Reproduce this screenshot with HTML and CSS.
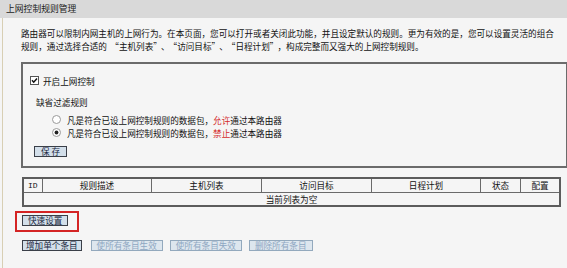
FILE: index.html
```html
<!DOCTYPE html>
<html lang="zh-CN">
<head>
    <meta charset="UTF-8">
    <title>上网控制规则管理</title>
    <link rel="stylesheet" href="styles.css">
</head>
<body>

    <div class="title">上网控制规则管理</div>

    <div class="main">
        <p class="intro">路由器可以限制内网主机的上网行为。在本页面，您可以打开或者关闭此功能，并且设定默认的规则。更为有效的是，您可以设置灵活的组合<br>规则，通过选择合适的<span class="quote">“主机列表”</span>、<span class="quote">“访问目标”</span>、<span class="quote">“日程计划”</span>，构成完整而又强大的上网控制规则。</p>

        <div class="panel">
            <label class="check-row">
                <svg class="cbox" width="9" height="9" viewBox="0 0 9 9">
                    <rect x="0.5" y="0.5" width="8" height="8" fill="#fff" stroke="#555"/>
                    <path d="M2 4.3 L3.7 6.2 L7 2.4" fill="none" stroke="#111" stroke-width="1.5"/>
                </svg>
                <span>开启上网控制</span>
            </label>

            <div class="rule-title">缺省过滤规则</div>

            <div class="radios">
                <label class="radio-row">
                    <svg class="rbox" width="9" height="9" viewBox="0 0 9 9">
                        <circle cx="4.5" cy="4.5" r="4" fill="#fff" stroke="#9a9a9a"/>
                    </svg>
                    <span>凡是符合已设上网控制规则的数据包，<span class="red">允许</span>通过本路由器</span>
                </label>
                <label class="radio-row">
                    <svg class="rbox" width="9" height="9" viewBox="0 0 9 9">
                        <circle cx="4.5" cy="4.5" r="4" fill="#fff" stroke="#9a9a9a"/>
                        <circle cx="4.5" cy="4.5" r="1.9" fill="#222"/>
                    </svg>
                    <span>凡是符合已设上网控制规则的数据包，<span class="red">禁止</span>通过本路由器</span>
                </label>
            </div>

            <button class="btn save-btn">保 存</button>
        </div>

        <table class="rules">
            <colgroup>
                <col style="width:19px">
                <col style="width:109px">
                <col style="width:110px">
                <col style="width:110px">
                <col style="width:109px">
                <col style="width:40px">
                <col style="width:38px">
            </colgroup>
            <thead>
                <tr>
                    <th class="id-col">ID</th>
                    <th>规则描述</th>
                    <th>主机列表</th>
                    <th>访问目标</th>
                    <th>日程计划</th>
                    <th>状态</th>
                    <th>配置</th>
                </tr>
            </thead>
            <tbody>
                <tr>
                    <td colspan="7">当前列表为空</td>
                </tr>
            </tbody>
        </table>

        <div class="quick">
            <button class="btn">快速设置</button>
        </div>

        <div class="actions">
            <button class="btn add-btn">增加单个条目</button>
            <button class="btn off-btn">使所有条目生效</button>
            <button class="btn off-btn">使所有条目失效</button>
            <button class="btn off-btn">删除所有条目</button>
        </div>
    </div>

</body>
</html>
```

FILE: styles.css
```css
body {
    margin: 0;
    padding: 0;
    width: 567px;
    height: 268px;
    overflow: hidden;
    background: #f5f5f5;
    font-family: "Noto Sans CJK SC", sans-serif;
    font-size: 8.6px;
    color: #111;
}
.title {
    height: 18px;
    line-height: 18px;
    padding-left: 6px;
    background: #d9d9d9;
    font-size: 8.8px;
    color: #222;
}
.main {
    margin-left: 2px;
    border-left: 1px solid #d8cfb4;
    height: 250px;
}
.intro {
    margin: 0;
    padding: 9px 0 0 18px;
    width: 540px;
    line-height: 13px;
}
/* quote marks drawn full width, as in the old router font */
.quote {
    margin: 0 0.39em;
}
/* settings box */
.panel {
    margin: 9px 0 0 18px;
    width: 536px;
    border: 2px solid #6b6b6b;
    padding: 10px 0 9px 7px;
    box-sizing: content-box;
}
.check-row {
    display: flex;
    align-items: center;
    gap: 4px;
    height: 13px;
}
.rule-title {
    margin: 9px 0 0 6px;
    line-height: 13px;
}
.radios {
    margin: 4px 0 0 22px;
}
.radio-row {
    display: flex;
    align-items: center;
    gap: 6px;
    height: 13px;
    white-space: nowrap;
}
.red {
    color: #d42a2a;
}
.btn {
    display: block;
    height: 11px;
    padding: 0 5px;
    margin: 0;
    border: 1px solid #3a3f48;
    background: #d3dfea;
    color: #1a2840;
    font-family: "Noto Sans CJK SC", sans-serif;
    font-size: 8.6px;
    line-height: 9px;
    white-space: nowrap;
}
.save-btn {
    margin: 7px 0 0 4px;
    padding: 0 6px;
}
/* Table Styles */
.rules {
    margin: 9px 0 0 19px;
    width: 539px;
    table-layout: fixed;
    border-collapse: separate;
    border-spacing: 0;
    border: 2px solid #5c5c5c;
}
.rules th {
    height: 13px;
    padding: 0;
    font-weight: normal;
    line-height: 13px;
    text-align: center;
    border-right: 1px solid #6a6a6a;
    border-bottom: 1px solid #6a6a6a;
}
.rules th:last-child {
    border-right: none;
}
.rules th.id-col {
    text-align: left;
    padding-left: 4px;
    font-family: "Liberation Mono", monospace;
    font-size: 8px;
}
.rules td {
    height: 12px;
    padding: 0;
    line-height: 12px;
    text-align: center;
}
.quick {
    display: inline-block;
    margin: 4px 0 0 12px;
    padding: 2px 9px 4px 5px;
    border: 2px solid #d42424;
}
.actions {
    display: flex;
    margin: 8px 0 0 19px;
    gap: 7px;
}
.add-btn {
    padding: 0 3px;
    margin-right: 2px;
}
.off-btn {
    border-color: #93a9bd;
    background: #dde6ee;
    color: #8ea6c2;
}
```
